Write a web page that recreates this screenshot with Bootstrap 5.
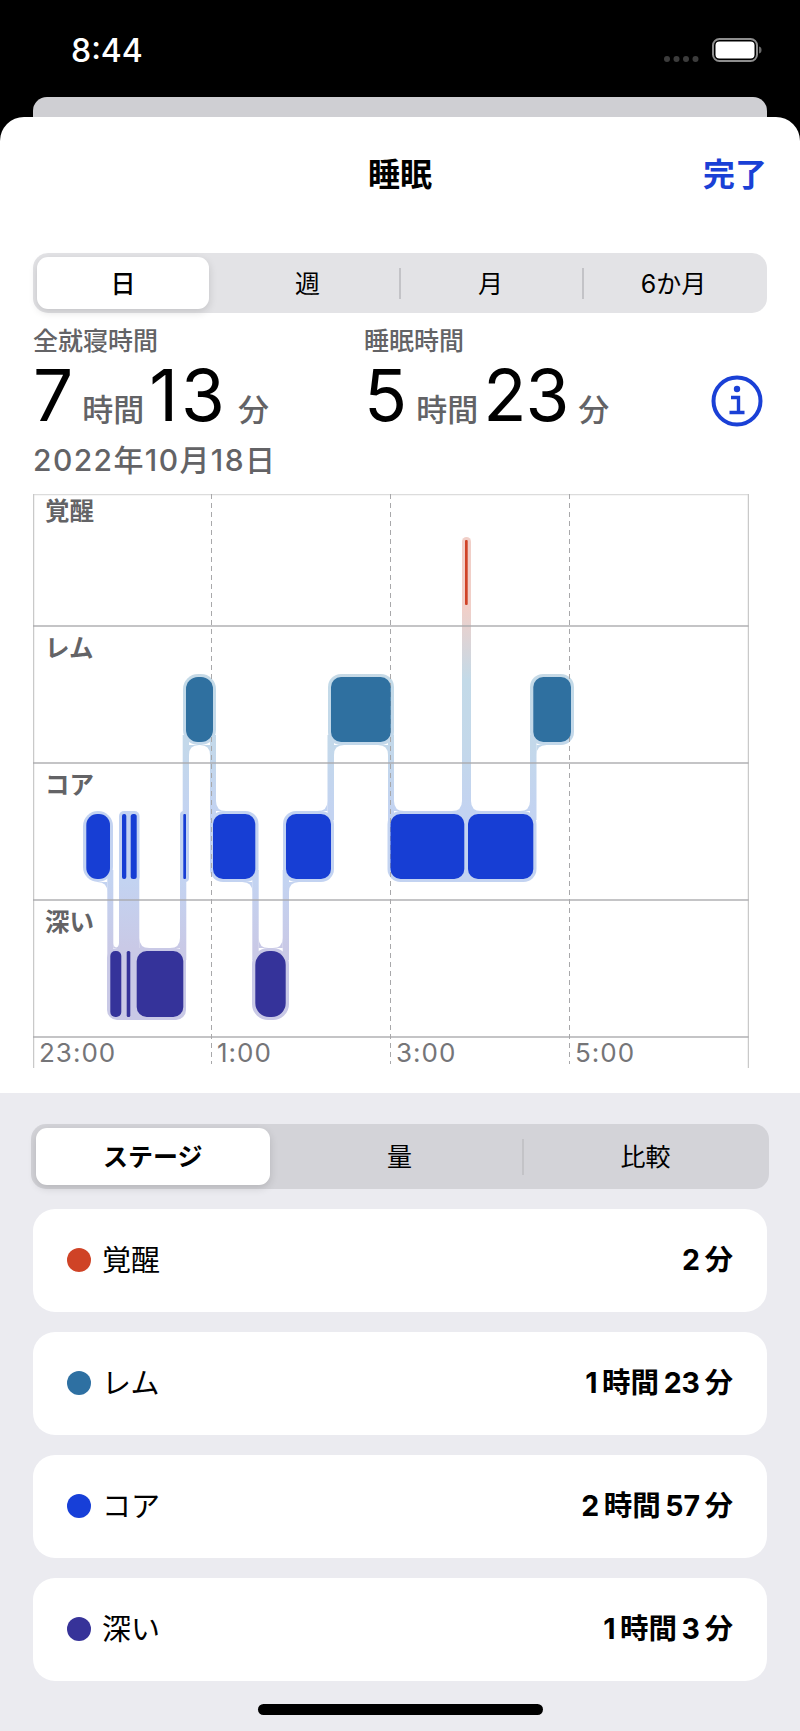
<!DOCTYPE html>
<html lang="ja">
<head>
<meta charset="utf-8">
<title>睡眠</title>
<link href="https://cdn.jsdelivr.net/npm/bootstrap@5.3.0/dist/css/bootstrap.min.css" rel="stylesheet">
<style>
html,body{margin:0;background:#000;}
body{width:800px;height:1731px;overflow:hidden;font-family:Inter,"Noto Sans CJK JP",sans-serif;color:#000;}
.sbar{height:97px;padding:0 38px 0 71px;}
.clock{color:#fff;font-size:32px;font-weight:500;line-height:1;padding-top:35px;height:97px;}
.backcard{height:20px;margin:0 33px;background:#cfcfd3;border-radius:14px 14px 0 0;}
.sheet{height:976px;background:#fff;border-radius:24px 24px 0 0;padding:0 33px;}
.shead{height:114px;position:relative;}
.stitle{font-size:32px;font-weight:700;line-height:1;padding-top:42px;}
.sdone{position:absolute;right:0;top:42px;font-size:32px;font-weight:700;line-height:1;color:#1a40d6;}
.segbar{background:#e3e3e6;border-radius:15px;height:60px;margin-top:22px;padding:4px 0;}
.segitem{width:183px;font-size:25px;line-height:1;position:relative;padding-top:2px;}
.segitem.sepl::before{content:"";position:absolute;left:0;top:11px;bottom:10px;width:1.5px;background:#c3c3c7;}
.segon{background:#fff;border-radius:11px;box-shadow:0 3px 8px rgba(0,0,0,.14);width:172px;margin:0 7px 0 4px;font-weight:500;}
.statcol1{width:331px;}
.statlabel{font-size:25px;font-weight:500;color:#636366;line-height:34px;margin-top:11px;}
.statnum{height:72px;line-height:70px;padding-top:2px;white-space:nowrap;}
.bignum{font-size:71px;font-weight:400;letter-spacing:-1px;}
.bignum.wide{letter-spacing:3px;}
.unit{font-size:31px;font-weight:500;color:#636366;margin:0 5px 0 10px;}
.info{width:52px;height:52px;margin:0 4px 3px 0;}
.dateline{font-size:30px;font-weight:500;color:#636366;line-height:32px;margin-top:14px;letter-spacing:1.4px;}
.chartbox{position:relative;width:716px;height:574px;margin-top:18px;}
.chartbox svg{display:block;}
.rowlabels{position:absolute;left:0;top:0;width:100%;}
.rowlabel{height:137px;padding:0 0 0 12px;font-size:24.500px;font-weight:700;color:#636366;line-height:34px;}
.axis{position:absolute;left:0;top:543px;width:100%;display:grid;grid-template-columns:178px 179px 179px 180px;}
.axis span{font-size:26px;color:#757578;line-height:32px;padding-left:6px;letter-spacing:1px;}
.lower{height:638px;background:#ebebf0;padding:0 33px;position:relative;}
.segbar2{background:#d3d3d8;border-radius:15px;height:65px;margin:0 -2px;padding:4px 0;position:relative;top:31px;}
.seg2a{width:234.5px;margin:0 7px 0 4.5px;font-weight:700;}
.seg2b{width:245px;}
.seg2c{width:247px;}
.seglist{padding-top:31px;}
.stagerow{height:102.5px;background:#fff;border-radius:22px;padding:0 34px;margin-top:20.5px;font-size:29px;}
.stagerow:first-child{margin-top:20px;}
.stagedot{width:24px;height:24px;border-radius:50%;margin-right:11px;}
.dot-a{background:#cf4326;}.dot-r{background:#2e70a2;}.dot-c{background:#173fd8;}.dot-d{background:#373399;}
.stageval{font-weight:700;font-size:28.500px;}
.stageval i{font-style:normal;margin:0 4.500px;}
.homebar{position:absolute;left:258px;top:611px;width:285px;height:11px;background:#000;border-radius:6px;}
</style>
</head>
<body>
<div class="sbar d-flex justify-content-between">
  <div class="clock">8:44</div>
  <svg width="99" height="97" viewBox="0 0 99 97" aria-hidden="true">
    <g fill="#3c3c3c"><circle cx="4" cy="59" r="3"/><circle cx="13.500" cy="59" r="3"/><circle cx="23" cy="59" r="3"/><circle cx="32.500" cy="59" r="3"/></g>
    <rect x="50" y="39" width="44" height="22" rx="6.500" fill="none" stroke="#8e8e8e" stroke-width="2"/>
    <rect x="52.500" y="41.500" width="39" height="17" rx="4" fill="#fff"/>
    <path d="M96 46.500c2 .5 2.500 1.500 2.500 3.500s-.5 3-2.500 3.500z" fill="#6a6a6a"/>
  </svg>
</div>
<div class="backcard"></div>
<div class="sheet">
  <div class="shead d-flex justify-content-center">
    <div class="stitle">睡眠</div>
    <div class="sdone">完了</div>
  </div>
  <div class="segbar d-flex">
    <div class="segitem segon d-flex align-items-center justify-content-center">日</div>
    <div class="segitem d-flex align-items-center justify-content-center">週</div>
    <div class="segitem sepl d-flex align-items-center justify-content-center">月</div>
    <div class="segitem sepl d-flex align-items-center justify-content-center">6か月</div>
  </div>
  <div class="d-flex">
    <div class="statcol1">
      <div class="statlabel">全就寝時間</div>
      <div class="statnum"><span class="bignum">7</span><span class="unit">時間</span><span class="bignum wide">13</span><span class="unit">分</span></div>
    </div>
    <div class="flex-grow-1">
      <div class="statlabel">睡眠時間</div>
      <div class="statnum"><span class="bignum">5</span><span class="unit">時間</span><span class="bignum">23</span><span class="unit">分</span></div>
    </div>
    <svg class="info align-self-end" viewBox="0 0 52 52" aria-hidden="true">
      <circle cx="26" cy="26" r="23.500" fill="none" stroke="#1a40d6" stroke-width="4"/>
      <circle cx="26" cy="14" r="3.200" fill="#1a40d6"/>
      <path d="M20 22.500h7.500v15M18.500 37.500h15" fill="none" stroke="#1a40d6" stroke-width="3.400"/>
    </svg>
  </div>
  <div class="dateline">2022年10月18日</div>
  <div class="chartbox">
    <svg width="716" height="574" viewBox="33 494 716 574" aria-hidden="true">
      <defs>
        <linearGradient id="halo" gradientUnits="userSpaceOnUse" x1="0" y1="537" x2="0" y2="1020">
          <stop offset=".147" stop-color="#f1cfc8"/>
          <stop offset=".296" stop-color="#c3dae8"/>
          <stop offset=".431" stop-color="#c3d8ea"/>
          <stop offset=".567" stop-color="#c3d3f1"/>
          <stop offset=".714" stop-color="#c3d3f1"/>
          <stop offset=".851" stop-color="#c9c9e6"/>
        </linearGradient>
      </defs>
      <g stroke-width="1.500" fill="none">
        <path d="M33 494.500H748.500" stroke="#dcdcdc"/>
        <path d="M33.500 494V1068M748.500 494V1068" stroke="#c9c9c9"/>
      </g>
      <g fill="url(#halo)">
        <rect x="83" y="811" width="30" height="71" rx="15"/>
        <rect x="119" y="811" width="20.500" height="71" rx="5"/>
        <rect x="180" y="811" width="9" height="71" rx="4"/>
        <rect x="210" y="811" width="48.500" height="71" rx="13"/>
        <rect x="283" y="811" width="51" height="71" rx="13"/>
        <rect x="387.500" y="811" width="149" height="71" rx="13"/>
        <rect x="107" y="948" width="79" height="72" rx="10"/>
        <rect x="252" y="948" width="37" height="72" rx="16"/>
        <rect x="183" y="674" width="33" height="71" rx="15"/>
        <rect x="328" y="674" width="66" height="71" rx="13"/>
        <rect x="530" y="674" width="44" height="71" rx="13"/>
        <rect x="462" y="537" width="9" height="71" rx="4.500"/>
        <rect x="107.300" y="870" width="6" height="90"/>
        <rect x="119" y="870" width="20.300" height="90"/>
        <rect x="180" y="870" width="6.300" height="90"/>
        <rect x="182.700" y="735" width="6.300" height="85"/>
        <rect x="210" y="735" width="6" height="85"/>
        <rect x="252.300" y="870" width="6.400" height="90"/>
        <rect x="282.700" y="870" width="6.300" height="90"/>
        <rect x="327.500" y="735" width="6.500" height="85"/>
        <rect x="388" y="735" width="6" height="85"/>
        <rect x="462" y="595" width="9" height="225"/>
        <rect x="530" y="735" width="6.500" height="85"/>
        <path d="M107.300 882h-10q10 0 10 10zM113.300 948h5q-5 0-5-5zM119 948h-5q5 0 5-5zM139.300 948h10q-10 0-10-10zM180 948h-10q10 0 10-10zM189 745h10q-10 0-10 10zM210 745h-10q10 0 10 10zM216 811h10q-10 0-10-10zM252.300 882h-10q10 0 10 10zM258.700 948h10q-10 0-10-10zM282.700 948h-10q10 0 10-10zM289 882h10q-10 0-10 10zM327.500 811h-10q10 0 10-10zM334 745h10q-10 0-10 10zM388 745h-10q10 0 10 10zM394 811h10q-10 0-10-10zM462 811h-10q10 0 10-10zM471 811h10q-10 0-10-10zM530 811h-10q10 0 10-10zM536.500 745h10q-10 0-10 10z"/>
      </g>
      <path d="M33 626H748.500M33 763H748.500M33 900H748.500M33 1037H748.500" stroke="#a9a9ab" stroke-width="1.500" fill="none" opacity=".9"/>
      <path d="M211.500 494V1064M390.500 494V1064M569.500 494V1064" stroke="#a8a8aa" stroke-width="1" stroke-dasharray="5 4" fill="none"/>
      <g fill="#173ed4">
        <rect x="86.300" y="814" width="23.700" height="65" rx="11"/>
        <rect x="122" y="814" width="4.300" height="65" rx="2"/>
        <rect x="130.700" y="814" width="6" height="65" rx="2.500"/>
        <rect x="183.300" y="814" width="2.700" height="65" rx="1"/>
        <rect x="213" y="814" width="42.300" height="65" rx="10"/>
        <rect x="286" y="814" width="45" height="65" rx="10"/>
        <rect x="390.500" y="814" width="73.800" height="65" rx="10"/>
        <rect x="468" y="814" width="65.300" height="65" rx="10"/>
      </g>
      <g fill="#35339a">
        <rect x="110.300" y="951" width="11" height="66" rx="5"/>
        <rect x="126.700" y="951" width="3.600" height="66" rx="1.500"/>
        <rect x="136.700" y="951" width="46.600" height="66" rx="10"/>
        <rect x="255.300" y="951" width="30.400" height="66" rx="14"/>
      </g>
      <g fill="#2f70a0">
        <rect x="186" y="677" width="27" height="65" rx="12"/>
        <rect x="331" y="677" width="59.700" height="65" rx="10"/>
        <rect x="533.300" y="677" width="37.700" height="65" rx="10"/>
      </g>
      <rect x="465" y="540" width="2.700" height="65" rx="1" fill="#d04327"/>
    </svg>
    <div class="rowlabels">
      <div class="rowlabel">覚醒</div>
      <div class="rowlabel">レム</div>
      <div class="rowlabel">コア</div>
      <div class="rowlabel">深い</div>
    </div>
    <div class="axis"><span>23:00</span><span>1:00</span><span>3:00</span><span>5:00</span></div>
  </div>
</div>
<div class="lower">
  <div class="segbar2 d-flex">
    <div class="segitem segon seg2a d-flex align-items-center justify-content-center">ステージ</div>
    <div class="segitem seg2b d-flex align-items-center justify-content-center">量</div>
    <div class="segitem seg2c sepl d-flex align-items-center justify-content-center">比較</div>
  </div>
  <div class="seglist">
    <div class="stagerow d-flex align-items-center"><span class="stagedot dot-a"></span><span>覚醒</span><span class="stageval ms-auto"><i>2</i>分</span></div>
    <div class="stagerow d-flex align-items-center"><span class="stagedot dot-r"></span><span>レム</span><span class="stageval ms-auto"><i>1</i>時間<i>23</i>分</span></div>
    <div class="stagerow d-flex align-items-center"><span class="stagedot dot-c"></span><span>コア</span><span class="stageval ms-auto"><i>2</i>時間<i>57</i>分</span></div>
    <div class="stagerow d-flex align-items-center"><span class="stagedot dot-d"></span><span>深い</span><span class="stageval ms-auto"><i>1</i>時間<i>3</i>分</span></div>
  </div>
  <div class="homebar"></div>
</div>
<script src="https://cdn.jsdelivr.net/npm/bootstrap@5.3.0/dist/js/bootstrap.bundle.min.js"></script>
</body>
</html>
